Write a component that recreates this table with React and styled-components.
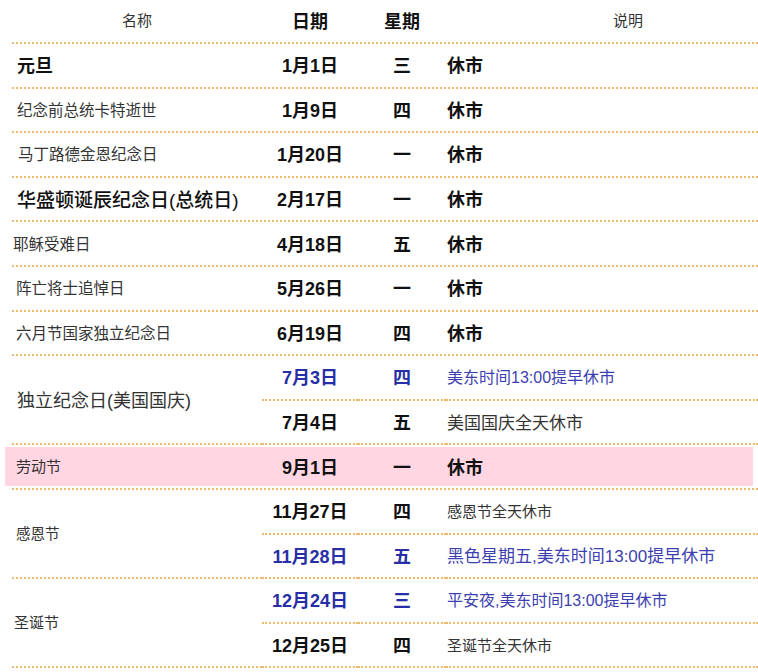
import React from "react"
import styled, { createGlobalStyle } from "styled-components"

const GlobalStyle = createGlobalStyle`
    html, body {
        margin: 0;
        padding: 0;
        background: #fff;
        overflow: hidden;
    }
    body {
        font-family: "Liberation Sans", "Noto Sans CJK SC", sans-serif;
        color: #222;
    }
`

const LINE = "2px dotted #ebbc6c"
const BLUE = "#272ea6"
const BLUE_TEXT = "#3d3fb0"
const COLS = "250px 96px 88px 1fr"

const Table = styled.div`
    width: 746px;
    margin-left: 12px;
    display: flex;
    flex-direction: column;
`

const HeaderRow = styled.div`
    display: grid;
    grid-template-columns: ${COLS};
    height: 44px;
    box-sizing: border-box;
    border-bottom: ${LINE};
`

const HeadCell = styled.div`
    display: flex;
    align-items: center;
    justify-content: ${(p) => (p.$offset ? "flex-start" : "center")};
    padding-left: ${(p) => p.$offset || 0}px;
    padding-bottom: 3px;
    font-size: ${(p) => (p.$strong ? "18px" : "15px")};
    font-weight: ${(p) => (p.$strong ? 700 : 400)};
    color: ${(p) => (p.$strong ? "#111" : "#333")};
`

const Row = styled.div`
    position: relative;
    isolation: isolate;
    display: grid;
    grid-template-columns: ${COLS};
    height: 44.6px;
    box-sizing: border-box;
    border-bottom: ${LINE};

    &::before {
        content: "";
        display: ${(p) => (p.$highlight ? "block" : "none")};
        position: absolute;
        left: -7px;
        right: 5px;
        top: 2px;
        bottom: 2px;
        background: #ffd6e2;
        z-index: -1;
    }
`

const Group = styled.div`
    display: grid;
    grid-template-columns: ${COLS};
    grid-template-rows: 44.6px 44.6px;

    & > * {
        box-sizing: border-box;
        border-bottom: ${LINE};
    }
`

const NameCell = styled.div`
    grid-row: ${(p) => (p.$span ? "span 2" : "auto")};
    display: flex;
    align-items: center;
    padding-left: ${(p) => p.$indent}px;
    padding-bottom: 2px;
    font-size: ${(p) => p.$size}px;
    font-weight: ${(p) => p.$weight || 400};
    color: ${(p) => (p.$weight ? "#111" : "#333")};
    white-space: nowrap;
`

const DateCell = styled.div`
    display: flex;
    align-items: center;
    justify-content: center;
    padding-bottom: 2px;
    font-size: 18px;
    font-weight: 700;
    color: ${(p) => (p.$blue ? BLUE : "#111")};
`

const WeekCell = styled(DateCell)``

const DescCell = styled.div`
    display: flex;
    align-items: center;
    padding-left: 1px;
    padding-bottom: 2px;
    white-space: nowrap;
    font-size: ${(p) => p.$size}px;
    font-weight: ${(p) => (p.$bold ? 700 : 400)};
    color: ${(p) => (p.$blue ? BLUE_TEXT : p.$bold ? "#111" : "#333")};
`

const rows = [
    { name: "元旦", size: 18, weight: 700, indent: 5, date: "1月1日", week: "三" },
    { name: "纪念前总统卡特逝世", size: 15.5, indent: 5, date: "1月9日", week: "四" },
    { name: "马丁路德金恩纪念日", size: 15.5, indent: 6, date: "1月20日", week: "一" },
    { name: "华盛顿诞辰纪念日(总统日)", size: 19, weight: 500, indent: 5, date: "2月17日", week: "一" },
    { name: "耶稣受难日", size: 15.5, indent: 1, date: "4月18日", week: "五" },
    { name: "阵亡将士追悼日", size: 15.5, indent: 4, date: "5月26日", week: "一" },
    { name: "六月节国家独立纪念日", size: 15.5, indent: 4, date: "6月19日", week: "四" },
    {
        name: "独立纪念日(美国国庆)", size: 18, indent: 5,
        items: [
            { date: "7月3日", week: "四", desc: "美东时间13:00提早休市", descSize: 16, blue: true },
            { date: "7月4日", week: "五", desc: "美国国庆全天休市", descSize: 17 },
        ],
    },
    { name: "劳动节", size: 15, indent: 4, date: "9月1日", week: "一", highlight: true },
    {
        name: "感恩节", size: 14.5, indent: 4,
        items: [
            { date: "11月27日", week: "四", desc: "感恩节全天休市", descSize: 15 },
            { date: "11月28日", week: "五", desc: "黑色星期五,美东时间13:00提早休市", descSize: 17, blue: true },
        ],
    },
    {
        name: "圣诞节", size: 15, indent: 2,
        items: [
            { date: "12月24日", week: "三", desc: "平安夜,美东时间13:00提早休市", descSize: 16, blue: true },
            { date: "12月25日", week: "四", desc: "圣诞节全天休市", descSize: 15 },
        ],
    },
]

const Cells = ({ item }) => (
    <>
        <DateCell $blue={item.blue}>{item.date}</DateCell>
        <WeekCell $blue={item.blue}>{item.week}</WeekCell>
        {item.desc ? (
            <DescCell $size={item.descSize} $blue={item.blue}>{item.desc}</DescCell>
        ) : (
            <DescCell $size={18} $bold>休市</DescCell>
        )}
    </>
)

export default function App() {
    return (
        <>
            <GlobalStyle />
            <Table>
                <HeaderRow>
                    <HeadCell>名称</HeadCell>
                    <HeadCell $strong>日期</HeadCell>
                    <HeadCell $strong>星期</HeadCell>
                    <HeadCell $offset={167}>说明</HeadCell>
                </HeaderRow>
                {rows.map((r) =>
                    r.items ? (
                        <Group key={r.name}>
                            <NameCell $span $size={r.size} $indent={r.indent} $weight={r.weight}>
                                {r.name}
                            </NameCell>
                            {r.items.map((it) => (
                                <Cells key={it.date} item={it} />
                            ))}
                        </Group>
                    ) : (
                        <Row key={r.name} $highlight={r.highlight}>
                            <NameCell $size={r.size} $indent={r.indent} $weight={r.weight}>
                                {r.name}
                            </NameCell>
                            <Cells item={r} />
                        </Row>
                    )
                )}
            </Table>
        </>
    )
}
